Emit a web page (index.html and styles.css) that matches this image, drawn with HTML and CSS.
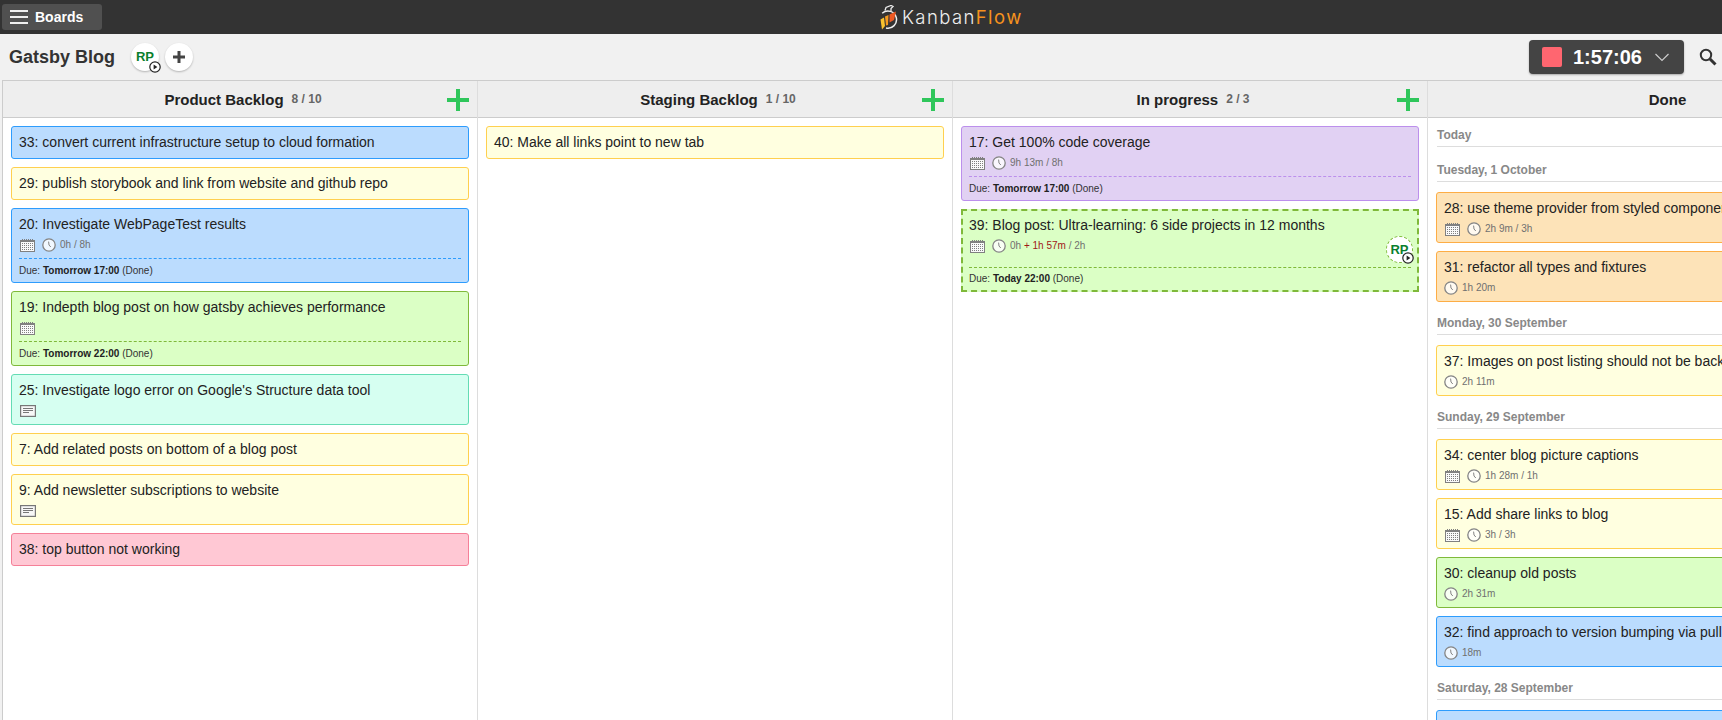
FILE: index.html
```html
<!DOCTYPE html>
<html lang="en">
<head>
	<meta charset="UTF-8">
	<title>Gatsby Blog - KanbanFlow</title>
	<link rel="stylesheet" href="styles.css">
</head>
<body>
	<svg class="defs" width="0" height="0">
		<symbol id="i-cal" viewBox="0 0 15 13">
			<rect x="0.5" y="1.5" width="14" height="11" fill="#fafafa" stroke="#808080"/>
			<path d="M1 2.5H14" stroke="#808080"/>
			<path d="M2 0.5H3M4 0.5H5M6 0.5H7M8 0.5H9M10 0.5H11M12 0.5H13" stroke="#808080"/>
			<path d="M2 4.5H13M2 6.5H13M2 8.5H13M2 10.5H13" stroke="#808080" stroke-dasharray="1 1"/>
		</symbol>
		<symbol id="i-clock" viewBox="0 0 14 14">
			<circle cx="7" cy="7" r="6.2" fill="#fff" fill-opacity=".8" stroke="#848484" stroke-width="1.3"/>
			<path d="M6.6 3.6L7 7L8.8 9" fill="none" stroke="#848484" stroke-width="1"/>
		</symbol>
		<symbol id="i-note" viewBox="0 0 16 12">
			<rect x="0.6" y="0.6" width="14.8" height="10.8" fill="#f7f7f7" stroke="#777" stroke-width="1.2"/>
			<path d="M3 3.5H13M3 5.5H13M3 7.5H9" stroke="#777"/>
		</symbol>
		<symbol id="i-play" viewBox="0 0 12 12">
			<circle cx="6" cy="6" r="5.2" fill="#fff" stroke="#222" stroke-width="1.2"/>
			<path d="M4.6 3.6L8.4 6L4.6 8.4Z" fill="#222"/>
		</symbol>
		<symbol id="i-add" viewBox="0 0 22 22">
			<path d="M9 0H13V9H22V13H13V22H9V13H0V9H9Z" fill="#2fc65b"/>
		</symbol>
	</svg>

	<div class="topbar">
		<a class="boards-btn">
			<span class="burger"></span>
			Boards
		</a>
		<div class="logo">
			<svg class="logo-mark" width="20" height="25" viewBox="0 0 20 25">
				<path d="M4.2 8.2A8.6 8.6 0 1 1 8 23" fill="none" stroke="#eee" stroke-width="1.5"/>
				<path d="M7 5.5L8 2.5L13 0.5L15 1.5L13 3.5L13 6" fill="none" stroke="#eee" stroke-width="1.3"/>
				<path d="M2.5 14.5L6 12.5L7 21L4 24.5Z" fill="#f9c22e"/>
				<path d="M7 11.5L10.5 10L10 20L8 20.5Z" fill="#f59a1f"/>
				<path d="M11.5 9.5L18 6.5L16 15L11.5 17.5Z" fill="#ee5a24"/>
			</svg>
			<span class="logo-text">Kanban<span class="logo-flow">Flow</span></span>
		</div>
	</div>

	<div class="board-head">
		<h1 class="board-title">Gatsby Blog</h1>
		<div class="round-btn user-btn">
			RP
			<svg class="play-badge" width="12" height="12"><use href="#i-play"/></svg>
		</div>
		<div class="round-btn add-btn">
			<svg width="14" height="14" viewBox="0 0 14 14"><path d="M5.5 1H8.5V5.5H13V8.5H8.5V13H5.5V8.5H1V5.5H5.5Z" fill="#444"/></svg>
		</div>
		<div class="timer">
			<span class="timer-stop"></span>
			<span class="timer-time">1:57:06</span>
			<svg width="16" height="9" viewBox="0 0 16 9"><path d="M1.5 1L8 7.5L14.5 1" fill="none" stroke="#ccc" stroke-width="1.2"/></svg>
		</div>
		<svg class="search" width="18" height="18" viewBox="0 0 18 18">
			<circle cx="7" cy="7" r="5.2" fill="none" stroke="#333" stroke-width="2"/>
			<path d="M11 11L16.5 16.5" stroke="#333" stroke-width="3"/>
		</svg>
	</div>

	<div class="board">
		<div class="col">
			<div class="col-head">
				<span class="col-name">Product Backlog</span><span class="col-count">8 / 10</span>
				<svg class="col-add" width="22" height="22"><use href="#i-add"/></svg>
			</div>
			<div class="col-list">
				<div class="card blue"><div class="card-body"><div class="card-title">33: convert current infrastructure setup to cloud formation</div></div></div>
				<div class="card yellow"><div class="card-body"><div class="card-title">29: publish storybook and link from website and github repo</div></div></div>
				<div class="card blue">
					<div class="card-body">
						<div class="card-title">20: Investigate WebPageTest results</div>
						<div class="meta">
							<svg class="ic-cal"><use href="#i-cal"/></svg>
							<svg class="ic-clock"><use href="#i-clock"/></svg>
							<span>0h / 8h</span>
						</div>
					</div>
					<div class="due">Due: <b>Tomorrow 17:00</b> (Done)</div>
				</div>
				<div class="card green">
					<div class="card-body">
						<div class="card-title">19: Indepth blog post on how gatsby achieves performance</div>
						<div class="meta">
							<svg class="ic-cal"><use href="#i-cal"/></svg>
						</div>
					</div>
					<div class="due">Due: <b>Tomorrow 22:00</b> (Done)</div>
				</div>
				<div class="card teal">
					<div class="card-body">
						<div class="card-title">25: Investigate logo error on Google's Structure data tool</div>
						<div class="meta"><svg class="ic-note"><use href="#i-note"/></svg></div>
					</div>
				</div>
				<div class="card yellow"><div class="card-body"><div class="card-title">7: Add related posts on bottom of a blog post</div></div></div>
				<div class="card yellow">
					<div class="card-body">
						<div class="card-title">9: Add newsletter subscriptions to website</div>
						<div class="meta"><svg class="ic-note"><use href="#i-note"/></svg></div>
					</div>
				</div>
				<div class="card pink"><div class="card-body"><div class="card-title">38: top button not working</div></div></div>
			</div>
		</div>

		<div class="col">
			<div class="col-head">
				<span class="col-name">Staging Backlog</span><span class="col-count">1 / 10</span>
				<svg class="col-add" width="22" height="22"><use href="#i-add"/></svg>
			</div>
			<div class="col-list">
				<div class="card yellow"><div class="card-body"><div class="card-title">40: Make all links point to new tab</div></div></div>
			</div>
		</div>

		<div class="col">
			<div class="col-head">
				<span class="col-name">In progress</span><span class="col-count">2 / 3</span>
				<svg class="col-add" width="22" height="22"><use href="#i-add"/></svg>
			</div>
			<div class="col-list">
				<div class="card purple">
					<div class="card-body">
						<div class="card-title">17: Get 100% code coverage</div>
						<div class="meta">
							<svg class="ic-cal"><use href="#i-cal"/></svg>
							<svg class="ic-clock"><use href="#i-clock"/></svg>
							<span>9h 13m / 8h</span>
						</div>
					</div>
					<div class="due">Due: <b>Tomorrow 17:00</b> (Done)</div>
				</div>
				<div class="card green active">
					<div class="card-body">
						<div class="card-title">39: Blog post: Ultra-learning: 6 side projects in 12 months</div>
						<div class="meta meta-tall">
							<svg class="ic-cal"><use href="#i-cal"/></svg>
							<svg class="ic-clock"><use href="#i-clock"/></svg>
							<span>0h <em class="over">+ 1h 57m</em> / 2h</span>
						</div>
					</div>
					<div class="due">Due: <b>Today 22:00</b> (Done)</div>
					<div class="card-user">
						RP
						<svg class="play-badge" width="12" height="12"><use href="#i-play"/></svg>
					</div>
				</div>
			</div>
		</div>

		<div class="col col-done">
			<div class="col-head">
				<span class="col-name">Done</span>
			</div>
			<div class="col-list">
				<div class="day">Today</div>
				<div class="day">Tuesday, 1 October</div>
				<div class="card orange">
					<div class="card-body">
						<div class="card-title">28: use theme provider from styled components</div>
						<div class="meta">
							<svg class="ic-cal"><use href="#i-cal"/></svg>
							<svg class="ic-clock"><use href="#i-clock"/></svg>
							<span>2h 9m / 3h</span>
						</div>
					</div>
				</div>
				<div class="card orange">
					<div class="card-body">
						<div class="card-title">31: refactor all types and fixtures</div>
						<div class="meta"><svg class="ic-clock first"><use href="#i-clock"/></svg><span>1h 20m</span></div>
					</div>
				</div>
				<div class="day">Monday, 30 September</div>
				<div class="card yellow">
					<div class="card-body">
						<div class="card-title">37: Images on post listing should not be background images</div>
						<div class="meta"><svg class="ic-clock first"><use href="#i-clock"/></svg><span>2h 11m</span></div>
					</div>
				</div>
				<div class="day">Sunday, 29 September</div>
				<div class="card yellow">
					<div class="card-body">
						<div class="card-title">34: center blog picture captions</div>
						<div class="meta">
							<svg class="ic-cal"><use href="#i-cal"/></svg>
							<svg class="ic-clock"><use href="#i-clock"/></svg>
							<span>1h 28m / 1h</span>
						</div>
					</div>
				</div>
				<div class="card yellow">
					<div class="card-body">
						<div class="card-title">15: Add share links to blog</div>
						<div class="meta">
							<svg class="ic-cal"><use href="#i-cal"/></svg>
							<svg class="ic-clock"><use href="#i-clock"/></svg>
							<span>3h / 3h</span>
						</div>
					</div>
				</div>
				<div class="card green">
					<div class="card-body">
						<div class="card-title">30: cleanup old posts</div>
						<div class="meta"><svg class="ic-clock first"><use href="#i-clock"/></svg><span>2h 31m</span></div>
					</div>
				</div>
				<div class="card blue">
					<div class="card-body">
						<div class="card-title">32: find approach to version bumping via pull requests</div>
						<div class="meta"><svg class="ic-clock first"><use href="#i-clock"/></svg><span>18m</span></div>
					</div>
				</div>
				<div class="day">Saturday, 28 September</div>
				<div class="card blue"><div class="card-body"><div class="card-title">&nbsp;</div></div></div>
			</div>
		</div>
	</div>
</body>
</html>
```

FILE: styles.css
```css
*{
	margin: 0;
	padding: 0;
	box-sizing: border-box;
}
html,body{
	height: 720px;
	overflow: hidden;
}
body{
	background: #f1f1f1;
	color: #222;
	font-family: "Liberation Sans", Arial, sans-serif;
	font-size: 14px;
}
.defs{
	display: block;
	height: 0;
}
/*top bar*/
.topbar{
	height: 34px;
	background: #333;
	display: flex;
	align-items: center;
	padding-left: 2px;
}
.boards-btn{
	width: 100px;
	height: 26px;
	background: #505050;
	border-radius: 3px;
	display: flex;
	align-items: center;
	gap: 7px;
	padding-left: 8px;
	color: #fff;
	font-size: 14px;
	font-weight: bold;
}
.burger{
	width: 18px;
	height: 14px;
	border-top: 2px solid #eee;
	border-bottom: 2px solid #eee;
	display: flex;
	align-items: center;
}
.burger::before{
	content: "";
	width: 100%;
	height: 2px;
	background: #eee;
}
.logo{
	display: flex;
	align-items: center;
	gap: 4px;
	margin-left: 776px;
}
.logo-text{
	color: #eee;
	font-family: "Inter", sans-serif;
	font-size: 18.5px;
	font-weight: 300;
	letter-spacing: 1.4px;
}
.logo-flow{
	color: #f5921e;
	font-weight: 400;
}
/*board title row*/
.board-head{
	height: 46px;
	display: flex;
	align-items: center;
	padding-left: 9px;
}
.board-title{
	font-size: 18px;
	color: #333;
	width: 122px;
}
.round-btn{
	width: 28px;
	height: 28px;
	border-radius: 50%;
	background: #fff;
	box-shadow: 0 1px 2px rgba(0,0,0,.25);
	display: flex;
	align-items: center;
	justify-content: center;
	position: relative;
}
.user-btn{
	padding-bottom: 1px;
	color: #0a7f2e;
	font-size: 13px;
	font-weight: bold;
}
.add-btn{
	margin-left: 6px;
}
.play-badge{
	position: absolute;
	right: -2px;
	bottom: -2px;
}
.timer{
	width: 155px;
	height: 34px;
	margin-left: auto;
	background: #444;
	border-radius: 4px;
	box-shadow: 0 1px 2px rgba(0,0,0,.3);
	display: flex;
	align-items: center;
	padding-left: 13px;
	color: #fff;
}
.timer-stop{
	width: 20px;
	height: 20px;
	background: #ff6670;
	border-radius: 2px;
}
.timer-time{
	font-size: 20px;
	font-weight: bold;
	margin: 0 12px 0 11px;
}
.search{
	margin: 0 5px 0 15px;
}
/*columns*/
.board{
	display: flex;
	width: 1900px;
	height: 640px;
	margin-left: 2px;
	background: #fff;
	border-top: 1px solid #ccc;
}
.col{
	width: 475px;
	flex: none;
	border-left: 1px solid #ddd;
}
.col:first-child{
	border-left-color: #ccc;
}
.col-head{
	height: 37px;
	background: #eee;
	border-bottom: 1px solid #ccc;
	display: flex;
	align-items: center;
	justify-content: center;
	padding-left: 6px;
	position: relative;
}
.col-done .col-head{
	padding-left: 5px;
}
.col-name{
	font-size: 15px;
	font-weight: bold;
}
.col-count{
	margin-left: 8px;
	font-size: 12px;
	font-weight: bold;
	color: #666;
}
.col-add{
	position: absolute;
	right: 8px;
	top: 8px;
}
.col-list{
	padding: 8px;
}
.col-done .col-list{
	padding-top: 4px;
}
/*cards*/
.card{
	width: 458px;
	border: 1px solid;
	border-radius: 3px;
	margin-bottom: 8px;
	position: relative;
}
.card-body{
	padding: 7px;
}
.card-title{
	line-height: 17px;
	white-space: nowrap;
}
.meta{
	height: 18px;
	display: flex;
	align-items: flex-start;
	padding-top: 6px;
	padding-left: 1px;
	color: #707070;
	font-size: 10px;
	line-height: 12px;
}
.meta-tall{
	height: 26px;
}
.ic-cal{
	width: 15px;
	height: 13px;
	margin-right: 7px;
}
.ic-clock{
	width: 14px;
	height: 14px;
	margin: -1px 4px 0 0;
}
.ic-clock.first{
	margin-left: -1px;
}
.ic-note{
	width: 16px;
	height: 12px;
}
.over{
	color: #a01818;
	font-style: normal;
}
.due{
	margin: 0 7px;
	border-top: 1px dashed;
	line-height: 23px;
	font-size: 10px;
	color: #333;
}
.due b{
	color: #222;
}
.card-user{
	position: absolute;
	right: 4px;
	top: 25px;
	width: 27px;
	height: 27px;
	padding-bottom: 1px;
	border-radius: 50%;
	background: #fff;
	border: 1px dashed #7fb93a;
	display: flex;
	align-items: center;
	justify-content: center;
	color: #0a7f2e;
	font-size: 13px;
	font-weight: bold;
}
.blue{background: #bbdcfe; border-color: #2d9cfd;}
.blue .due{border-color: #2d9cfd;}
.yellow{background: #ffffe0; border-color: #ffd04f;}
.green{background: #dbffc5; border-color: #7fb93a;}
.green .due{border-color: #7fb93a;}
.teal{background: #d6fff1; border-color: #64dcb4;}
.pink{background: #ffc8d4; border-color: #f58098;}
.purple{background: #e1d1f3; border-color: #bc8fec;}
.purple .due{border-color: #bc8fec;}
.orange{background: #fde3b8; border-color: #fdad45;}
.active{
	border: 2px dashed #7fb93a;
	border-radius: 0;
}
.active .card-body{
	padding: 6px 6px 7px;
}
.active .due{
	margin: 0 6px;
	line-height: 22px;
}
/*done column day headings*/
.day{
	height: 25px;
	margin: 0 0 10px 1px;
	padding-top: 2px;
	border-bottom: 1px solid #ddd;
	color: #888;
	font-size: 12px;
	font-weight: bold;
	line-height: 22px;
}
```
